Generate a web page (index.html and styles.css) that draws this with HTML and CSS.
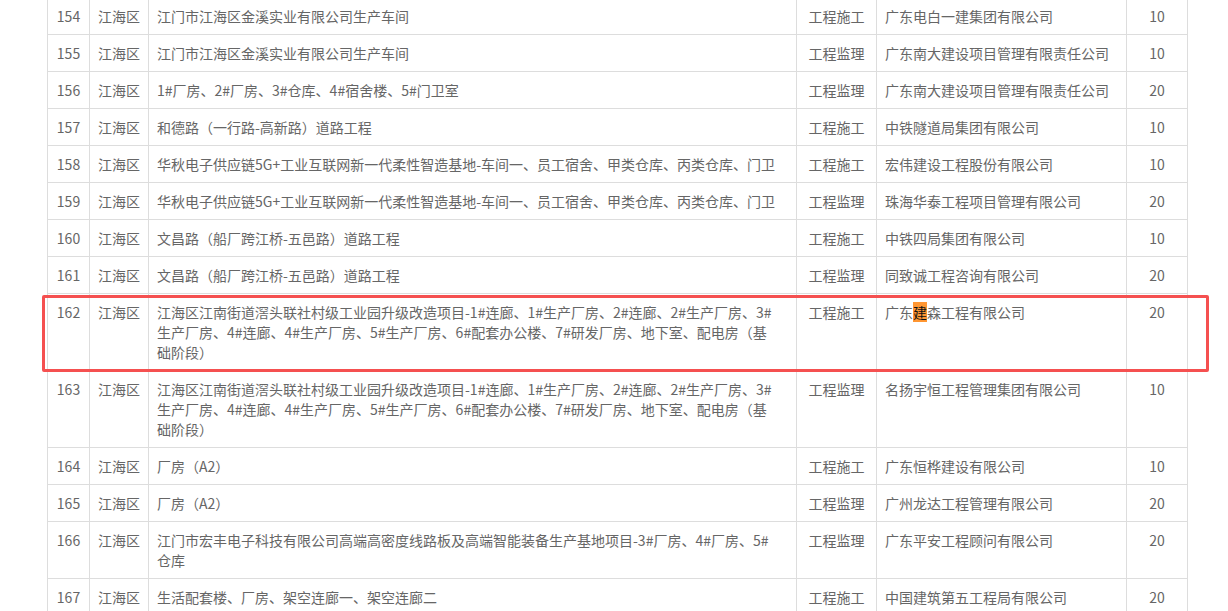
FILE: index.html
```html
<!DOCTYPE html>
<html lang="zh-CN">
<head>
<meta charset="utf-8">
<title>项目列表</title>
<link rel="stylesheet" href="styles.css">
</head>
<body>
<div class="wrap">
<table class="list">
<colgroup>
<col class="c-no"><col class="c-area"><col class="c-name"><col class="c-type"><col class="c-org"><col class="c-score">
</colgroup>
<tbody>
<tr><td class="ctr">154</td><td class="ctr">江海区</td><td class="name">江门市江海区金溪实业有限公司生产车间</td><td class="ctr">工程施工</td><td>广东电白一建集团有限公司</td><td class="ctr">10</td></tr>
<tr><td class="ctr">155</td><td class="ctr">江海区</td><td class="name">江门市江海区金溪实业有限公司生产车间</td><td class="ctr">工程监理</td><td>广东南大建设项目管理有限责任公司</td><td class="ctr">10</td></tr>
<tr><td class="ctr">156</td><td class="ctr">江海区</td><td class="name">1#厂房、2#厂房、3#仓库、4#宿舍楼、5#门卫室</td><td class="ctr">工程监理</td><td>广东南大建设项目管理有限责任公司</td><td class="ctr">20</td></tr>
<tr><td class="ctr">157</td><td class="ctr">江海区</td><td class="name">和德路（一行路-高新路）道路工程</td><td class="ctr">工程施工</td><td>中铁隧道局集团有限公司</td><td class="ctr">10</td></tr>
<tr><td class="ctr">158</td><td class="ctr">江海区</td><td class="name">华秋电子供应链5G+工业互联网新一代柔性智造基地-车间一、员工宿舍、甲类仓库、丙类仓库、门卫</td><td class="ctr">工程施工</td><td>宏伟建设工程股份有限公司</td><td class="ctr">10</td></tr>
<tr><td class="ctr">159</td><td class="ctr">江海区</td><td class="name">华秋电子供应链5G+工业互联网新一代柔性智造基地-车间一、员工宿舍、甲类仓库、丙类仓库、门卫</td><td class="ctr">工程监理</td><td>珠海华泰工程项目管理有限公司</td><td class="ctr">20</td></tr>
<tr><td class="ctr">160</td><td class="ctr">江海区</td><td class="name">文昌路（船厂跨江桥-五邑路）道路工程</td><td class="ctr">工程施工</td><td>中铁四局集团有限公司</td><td class="ctr">10</td></tr>
<tr><td class="ctr">161</td><td class="ctr">江海区</td><td class="name">文昌路（船厂跨江桥-五邑路）道路工程</td><td class="ctr">工程监理</td><td>同致诚工程咨询有限公司</td><td class="ctr">20</td></tr>
<tr><td class="ctr">162</td><td class="ctr">江海区</td><td class="name">江海区江南街道滘头联社村级工业园升级改造项目-1#连廊、1#生产厂房、2#连廊、2#生产厂房、3#生产厂房、4#连廊、4#生产厂房、5#生产厂房、6#配套办公楼、7#研发厂房、地下室、配电房（基础阶段）</td><td class="ctr">工程施工</td><td>广东<mark class="hit">建</mark>森工程有限公司</td><td class="ctr">20</td></tr>
<tr><td class="ctr">163</td><td class="ctr">江海区</td><td class="name">江海区江南街道滘头联社村级工业园升级改造项目-1#连廊、1#生产厂房、2#连廊、2#生产厂房、3#生产厂房、4#连廊、4#生产厂房、5#生产厂房、6#配套办公楼、7#研发厂房、地下室、配电房（基础阶段）</td><td class="ctr">工程监理</td><td>名扬宇恒工程管理集团有限公司</td><td class="ctr">10</td></tr>
<tr><td class="ctr">164</td><td class="ctr">江海区</td><td class="name">厂房（A2）</td><td class="ctr">工程施工</td><td>广东恒桦建设有限公司</td><td class="ctr">10</td></tr>
<tr><td class="ctr">165</td><td class="ctr">江海区</td><td class="name">厂房（A2）</td><td class="ctr">工程监理</td><td>广州龙达工程管理有限公司</td><td class="ctr">20</td></tr>
<tr><td class="ctr">166</td><td class="ctr">江海区</td><td class="name">江门市宏丰电子科技有限公司高端高密度线路板及高端智能装备生产基地项目-3#厂房、4#厂房、5#仓库</td><td class="ctr">工程监理</td><td>广东平安工程顾问有限公司</td><td class="ctr">20</td></tr>
<tr><td class="ctr">167</td><td class="ctr">江海区</td><td class="name">生活配套楼、厂房、架空连廊一、架空连廊二</td><td class="ctr">工程施工</td><td>中国建筑第五工程局有限公司</td><td class="ctr">20</td></tr>
</tbody>
</table>
<div class="mark-box"></div>
</div>
</body>
</html>
```

FILE: styles.css
```css
html, body {
  margin: 0;
  padding: 0;
  background: #fff;
}
body {
  font-family: "Microsoft YaHei", "Noto Sans CJK SC", sans-serif;
  font-size: 14px;
  color: #666;
  overflow: hidden;
}
.wrap {
  position: relative;
  margin-top: -3px;
  padding-left: 47px;
}
.list {
  border-collapse: collapse;
  table-layout: fixed;
  width: 1140px;
}
.c-no { width: 42px; }
.c-area { width: 59px; }
.c-name { width: 648px; }
.c-type { width: 80px; }
.c-org { width: 250px; }
.c-score { width: 61px; }
.list td {
  border: 1px solid #ddd;
  padding: 8px 8px;
  line-height: 20px;
  vertical-align: top;
  text-align: left;
  word-break: break-all;
}
.list td.name {
  padding-right: 19px;
}
.list td.ctr {
  text-align: center;
  padding-left: 4px;
  padding-right: 4px;
}
.hit {
  background: #ff9632;
  color: #111;
}
.mark-box {
  position: absolute;
  left: 42px;
  top: 298px;
  width: 1167px;
  height: 77px;
  box-sizing: border-box;
  border: 3px solid #f55050;
  border-radius: 2px;
  pointer-events: none;
}
```
